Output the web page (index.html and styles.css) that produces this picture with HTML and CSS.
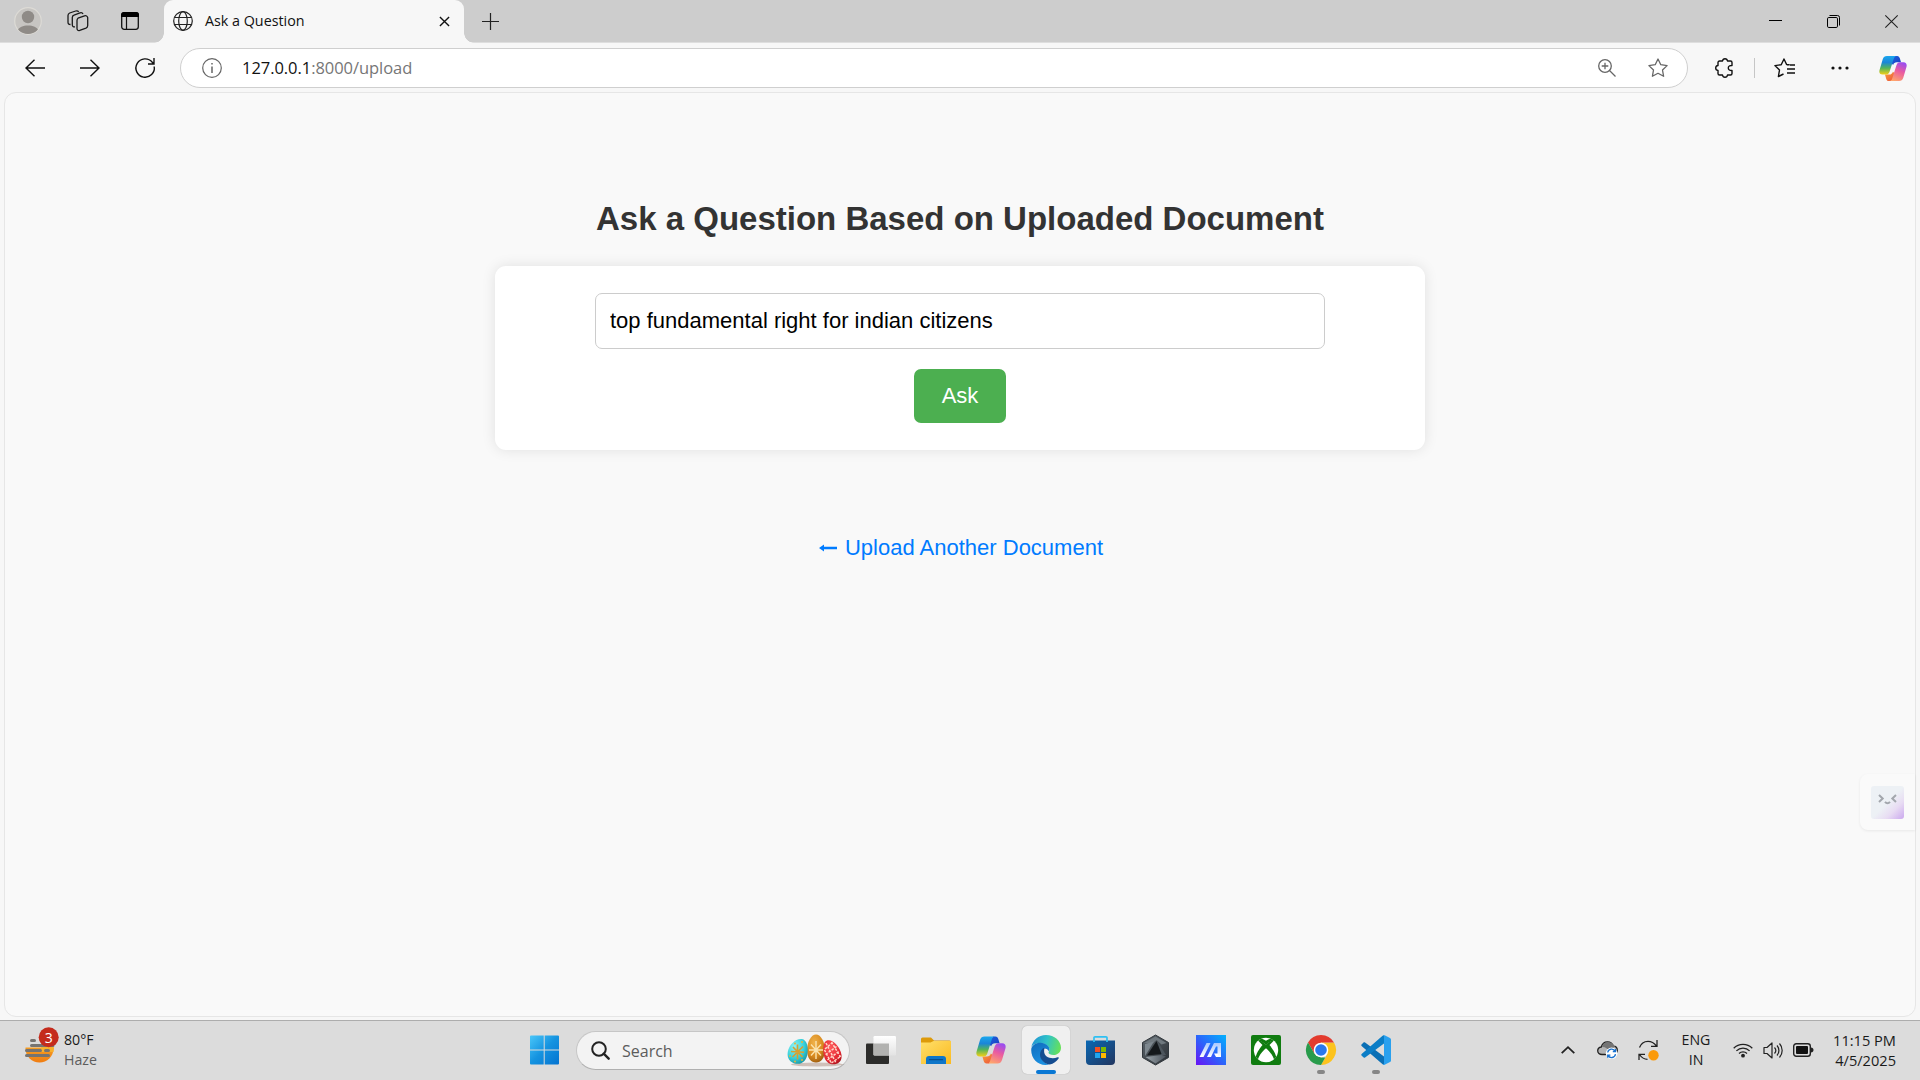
FILE: index.html
```html
<!DOCTYPE html>
<html lang="en">
<head>
<meta charset="utf-8">
<title>Ask a Question</title>
<link rel="stylesheet" href="styles.css">
</head>
<body>
<svg class="defs" width="0" height="0" aria-hidden="true">
  <defs>
    <linearGradient id="cp-a" x1="0" y1="0" x2="0" y2="1"><stop offset="0" stop-color="#1aa7ee"/><stop offset=".35" stop-color="#1b86d8"/><stop offset=".65" stop-color="#52b45c"/><stop offset="1" stop-color="#f5cf16"/></linearGradient>
    <linearGradient id="cp-b" x1=".7" y1="0" x2=".3" y2="1"><stop offset="0" stop-color="#9a4df0"/><stop offset=".45" stop-color="#ea5ba0"/><stop offset="1" stop-color="#ffa66b"/></linearGradient>
    <linearGradient id="cp-c" x1="0" y1="0" x2="1" y2="1"><stop offset="0" stop-color="#1b62e0"/><stop offset="1" stop-color="#1c3fc0"/></linearGradient>
    <linearGradient id="cp-d" x1="0" y1="0" x2="1" y2="1"><stop offset="0" stop-color="#f9a13a"/><stop offset="1" stop-color="#ea4a3c"/></linearGradient>
    <symbol id="copilot" viewBox="0 0 30 28">
      <path d="M17 .5h2.500c1.600 0 2.300 1 2.800 2.500l1.300 4.200h-4.600c-2 0-3.200 1-3.900 3L12 7z" fill="url(#cp-c)"/>
      <path d="M13 27.500h-2.500c-1.600 0-2.300-1-2.800-2.500L6.400 20.500H11c2 0 3.200-1 3.900-3L19 21z" fill="url(#cp-d)"/>
      <path d="M8.500.500H19c-2 0-2.700 1.400-3.400 3.600L11.300 17.500c-.7 2-1.800 3-3.800 3H3.700C.8 20.500-.2 18.300.6 15.500L4 4C4.800 1.600 6.200.500 8.500.500z" fill="url(#cp-a)"/>
      <path d="M21.500 27.500H11c2 0 2.700-1.400 3.400-3.600l4.300-13.400c.7-2 1.800-3.300 3.800-3.300h3.800c2.900 0 3.900 2.500 3.100 5.300L26 24c-.8 2.400-2.200 3.500-4.500 3.500z" fill="url(#cp-b)"/>
    </symbol>
  </defs>
</svg>

<div class="screen">
  <header class="tabstrip">
    <svg class="avatar" width="28" height="28" viewBox="0 0 28 28"><defs><clipPath id="av"><circle cx="14" cy="14" r="13"/></clipPath></defs><circle cx="14" cy="14" r="13.300" fill="#c7c5c2" stroke="#dddbd6" stroke-width="1.200"/><g fill="#8f8b87" clip-path="url(#av)"><circle cx="14" cy="10" r="6.200"/><path d="M3.500 28v-4.500C5 20 9 18.500 14 18.500s9 1.500 10.500 5V28z"/></g></svg>
    <svg class="workspaces" width="22" height="22" viewBox="0 0 22 22" fill="none" stroke="#1a1a1a" stroke-width="1.300"><path d="M11 8.200 17.500 5.800c1.500-.5 3 .3 3.200 1.800v8c0 1.200-.5 2-1.700 2.500l-6.300 2.300c-1.500.5-2.700-.3-2.700-1.800v-8c0-1.200.2-1.900 1-2.400z"/><path d="M8 16.800c-1.800.2-2.700-.6-2.700-2V7.500c0-1.200.5-2 1.700-2.400l6-2.200c1.300-.5 2.500 0 3 1.100"/><path d="M3.500 14.500C1.800 14.500 1 13.600 1 12.300V5.500c0-1.300.5-2 1.700-2.500l6-2c1.300-.4 2.300-.1 3 .8"/></svg>
    <svg class="vtabs" width="18" height="18" viewBox="0 0 18 18"><rect x=".7" y=".7" width="16.600" height="16.600" rx="2.500" fill="none" stroke="#111" stroke-width="1.300"/><path d="M0 5V3a3 3 0 0 1 3-3h12a3 3 0 0 1 3 3v2z" fill="#000"/><path d="M5.500 5v12" stroke="#111" stroke-width="1.200"/></svg>
    <div class="tab">
      <svg width="20" height="20" viewBox="0 0 20 20" fill="none" stroke="#222" stroke-width="1.200"><circle cx="10" cy="10" r="9.300"/><ellipse cx="10" cy="10" rx="4.300" ry="9.300"/><path d="M1.500 6.500h17M1.500 13.500h17"/></svg>
      <span class="tab-title">Ask a Question</span>
      <svg class="tab-close" width="11" height="11" viewBox="0 0 12 12" stroke="#111" stroke-width="1.500"><path d="m1 1 10 10M11 1 1 11"/></svg>
    </div>
    <svg class="newtab" width="17" height="17" viewBox="0 0 17 17" stroke="#222" stroke-width="1.200"><path d="M8.500 0v17M0 8.500h17"/></svg>
    <div class="winctl">
      <svg width="13" height="13" viewBox="0 0 13 13"><path d="M0 5.500h13" stroke="#000"/></svg>
      <svg width="13" height="13" viewBox="0 0 13 13" fill="none" stroke="#000"><rect x=".5" y="2.500" width="10" height="10" rx="1.300"/><path d="M2.500.500h8a2 2 0 0 1 2 2v8"/></svg>
      <svg width="13" height="13" viewBox="0 0 13 13" stroke="#222" stroke-width="1.100"><path d="m.3.300 12.400 12.400M12.700.300.300 12.700"/></svg>
    </div>
  </header>

  <nav class="toolbar">
    <div class="navbtns">
      <svg width="20" height="18" viewBox="0 0 20 18" fill="none" stroke="#111" stroke-width="1.400"><path d="M20 9H1M9.500.700 1 9l8.500 8.300"/></svg>
      <svg width="20" height="18" viewBox="0 0 20 18" fill="none" stroke="#111" stroke-width="1.400"><path d="M0 9h19M10.500.700 19 9l-8.500 8.300"/></svg>
      <svg width="20" height="20" viewBox="0 0 20 20" fill="none" stroke="#111" stroke-width="1.400"><path d="M19.200 8.500A9.200 9.200 0 1 1 17.300 4.300L18.800 6M19 0v6h-6"/></svg>
    </div>
    <div class="omnibox">
      <svg width="20" height="20" viewBox="0 0 20 20" fill="none" stroke="#666" stroke-width="1.200"><circle cx="10" cy="10" r="9.300"/><path d="M10 8.500V15M10 5v1.600" stroke-width="1.500"/></svg>
      <span class="url"><b>127.0.0.1</b>:8000/upload</span>
      <svg class="zoomicon" width="18" height="18" viewBox="0 0 18 18" fill="none" stroke="#666" stroke-width="1.300"><circle cx="7" cy="7" r="6.300"/><path d="M7 3.700v6.600M3.700 7h6.600M11.500 11.500l6 6"/></svg>
      <svg class="staricon" width="20" height="20" viewBox="0 0 20 20" fill="none" stroke="#666" stroke-width="1.300" stroke-linejoin="round"><path d="m10 1 2.800 5.700 6.300.9-4.600 4.400 1.100 6.300-5.600-3-5.600 3 1.100-6.300L.9 7.600l6.300-.9z"/></svg>
    </div>
    <svg class="puzzle" width="20" height="20" viewBox="0 0 20 20" fill="none" stroke="#111" stroke-width="1.400" stroke-linejoin="round"><path d="M4.500 3h3C7.700 1.500 8.600.700 10 .700s2.300.8 2.500 2.300h3A1.500 1.500 0 0 1 17 4.500v3c-2.200-.2-3.700.8-3.700 2.500s1.500 2.700 3.700 2.500v3a1.500 1.500 0 0 1-1.500 1.500h-3c-.2 1.500-1.100 2.300-2.500 2.300S7.700 18.500 7.500 17h-3A1.500 1.500 0 0 1 3 15.500v-3C1.500 12.300.700 11.400.700 10S1.500 7.700 3 7.500v-3A1.500 1.500 0 0 1 4.500 3z"/></svg>
    <span class="sep"></span>
    <svg class="favs" width="21" height="20" viewBox="0 0 21 20" fill="none" stroke="#111" stroke-width="1.400" stroke-linejoin="round"><path d="M12.700 6.700 10 1 7.200 6.700l-6.300.9L5.500 12l-1.100 6.500L9.500 16M12.700 6.700h3M13 11h8M13 15h8M16 7h5"/></svg>
    <svg class="more" width="18" height="4" viewBox="0 0 18 4" fill="#111"><circle cx="2" cy="2" r="1.600"/><circle cx="9" cy="2" r="1.600"/><circle cx="16" cy="2" r="1.600"/></svg>
    <svg class="copilot-btn" width="28" height="27"><use href="#copilot" width="28" height="27"/></svg>
  </nav>

  <main class="viewport">
    <h1>Ask a Question Based on Uploaded Document</h1>
    <form class="card">
      <input type="text" value="top fundamental right for indian citizens">
      <button type="button">Ask</button>
    </form>
    <a class="back"><svg width="18" height="8" viewBox="0 0 18 8" fill="#007bff"><path d="M0 4 5 .500v2.200h13v2.600H5v2.200z"/></svg><span>Upload Another Document</span></a>
    <aside class="helper">
      <div class="face"><svg width="19" height="11" viewBox="0 0 19 11" fill="none" stroke="#a3a7ad" stroke-width="2"><path d="m1 1 3.700 3.500L1 8M18 1l-3.700 3.500L18 8M7 7.800c1.500 1.900 3.500 1.900 5 0"/></svg></div>
    </aside>
  </main>

  <footer class="taskbar">
    <div class="weather">
      <svg width="36" height="38" viewBox="0 0 36 38">
        <defs><linearGradient id="sun" x1="0" y1="0" x2="0" y2="1"><stop offset="0" stop-color="#f9b830"/><stop offset="1" stop-color="#f07d12"/></linearGradient></defs>
        <circle cx="14.500" cy="21.500" r="14" fill="url(#sun)"/><path d="M0 0h30v20.500H0z" fill="#dcdcdc"/><path d="M16 23a6 6 0 0 1 13-2l-.5 4H16z" fill="#f9b02a"/>
        <g stroke="#767472" stroke-width="3" stroke-linecap="round"><path d="M6.500 13.500h3M6.500 18.500H28M1.500 23.500h14M20.500 23.500h3M1.500 28.500h22"/></g>
        <circle cx="23.700" cy="10.300" r="10" fill="#c42b1c"/>
        <text x="23.700" y="15.500" class="badge" text-anchor="middle">3</text>
      </svg>
      <div class="weather-text"><span>80°F</span><span class="dim">Haze</span></div>
    </div>

    <div class="apps">
      <div class="cell"><svg width="30" height="30" viewBox="0 0 30 30"><defs><linearGradient id="win" gradientUnits="userSpaceOnUse" x1="0" y1="0" x2="30" y2="30"><stop offset="0" stop-color="#4cc9fa"/><stop offset=".5" stop-color="#1593e0"/><stop offset="1" stop-color="#0473d0"/></linearGradient></defs><path fill="url(#win)" d="M2 .500H14.700v14H1v-13a1 1 0 0 1 1-1zM15.700.500h13.300a1 1 0 0 1 1 1v13h-14.300zM1 15.500h13.700v14H2a1 1 0 0 1-1-1zM15.700 15.500H30v13a1 1 0 0 1-1 1h-13.300z"/></svg></div>
      <div class="search">
        <svg width="19" height="19" viewBox="0 0 19 19" fill="none" stroke="#222" stroke-width="2"><circle cx="8" cy="8" r="6.800"/><path d="m12.700 12.700 5 5" stroke-width="2.400" stroke-linecap="round"/></svg>
        <span>Search</span>
        <svg class="eggs" width="56" height="33" viewBox="0 0 56 33">
          <defs><radialGradient id="e1" cx=".35" cy=".3" r=".8"><stop offset="0" stop-color="#8cf2f6"/><stop offset=".6" stop-color="#37cfd8"/><stop offset="1" stop-color="#168f9d"/></radialGradient><radialGradient id="e2" cx=".4" cy=".3" r=".8"><stop offset="0" stop-color="#f0b24a"/><stop offset=".6" stop-color="#d8891e"/><stop offset="1" stop-color="#8f520e"/></radialGradient><radialGradient id="e3" cx=".4" cy=".3" r=".8"><stop offset="0" stop-color="#ff5a5c"/><stop offset=".7" stop-color="#e32530"/><stop offset="1" stop-color="#a01019"/></radialGradient></defs>
          <ellipse cx="30" cy="30.500" rx="26" ry="2" fill="#bfa9a0" opacity=".7"/>
          <path d="M29 .500c5 0 9 8 9 15.500 0 8-4 12.500-9 12.500S20 24 20 16C20 8.500 24 .500 29 .500z" fill="url(#e2)"/>
          <path d="M15 5c4.500 1 6.500 7 5.500 14.500C19.500 27 15 30.500 9 29.700 3 29-.3 24 .8 17.800 2 10.500 9 4 15 5z" fill="url(#e1)"/>
          <path d="M40 6.500c6-1.500 13.500 7 14.500 14.500.7 5-2 8.500-6.500 9.200-5 .8-9.500-2-11-8.200-1.300-6-1-14.400 3-15.500z" fill="url(#e3)"/>
          <g stroke="#d99f2e" stroke-width="1.600"><path d="m4 17.500 13 .8M10.500 10.500v15M6 13l9.500 10M16 12.500 5.500 23"/></g>
          <g stroke="#fbe3ae" stroke-width="1.400"><path d="M29 7v18M22 16h14M24 10.500l10 11M34 10.500l-10 11"/></g>
          <g stroke="#ffd6c8" stroke-width="1.500" stroke-dasharray="2.500 1.300"><path d="M39 9l10 20M44.500 8l9 15M37.500 16l7 13.500M38 15l7-6M38.500 20.500l11-8M40.500 26l12-9M44.500 29l9.500-7"/></g>
          <g fill="#e5b33c"><circle cx="8" cy="9.500" r="1"/><circle cx="15" cy="8" r="1"/><circle cx="3" cy="22" r="1"/><circle cx="8" cy="27.500" r="1"/><circle cx="15" cy="26" r="1"/></g>
        </svg>
      </div>
      <div class="cell"><svg width="30" height="28" viewBox="0 0 30 28"><defs><linearGradient id="tv" x1="0" y1="0" x2="0" y2="1"><stop offset="0" stop-color="#fff"/><stop offset="1" stop-color="#e3e3e3"/></linearGradient></defs><rect x="0" y="7.500" width="23" height="20.500" rx="1" fill="#2c2c2a"/><rect x="7.500" y="0" width="22.500" height="19.500" rx="1.200" fill="url(#tv)"/><path d="M7.500 7.500H23v12H8.500a1 1 0 0 1-1-1z" fill="#b2b2b0"/></svg></div>
      <div class="cell"><svg width="30" height="27" viewBox="0 0 30 27"><defs><linearGradient id="fo" x1="0" y1="0" x2="1" y2="1"><stop offset="0" stop-color="#ffdf6a"/><stop offset="1" stop-color="#fbba20"/></linearGradient></defs><path d="M1.500.500H10l3 3h15.500a1.500 1.500 0 0 1 1.500 1.500v6H0V2A1.500 1.500 0 0 1 1.500.500z" fill="#dd9a0a"/><path d="M0 5.500h9.500l3-1.500H30v23H0z" fill="url(#fo)"/><path d="M5 27v-5a3 3 0 0 1 3-3h14a3 3 0 0 1 3 3v5z" fill="#0f76c9"/><path d="M8.500 22.700h13" stroke="#0a4f8f" stroke-width="1.300" stroke-linecap="round"/></svg></div>
      <div class="cell"><svg width="30" height="28"><use href="#copilot" width="30" height="28"/></svg></div>
      <div class="cell active"><svg width="30" height="30" viewBox="0 0 30 30"><defs><linearGradient id="ed1" x1="0" y1=".3" x2="1" y2=".5"><stop offset="0" stop-color="#2092d4"/><stop offset=".5" stop-color="#2fc3c8"/><stop offset="1" stop-color="#66e05a"/></linearGradient><linearGradient id="ed2" x1="0" y1="0" x2=".4" y2="1"><stop offset="0" stop-color="#0f6cbd"/><stop offset="1" stop-color="#1b8fe0"/></linearGradient></defs>
        <path d="M.300 12.500C1.500 5 7.500 0 15 0c8.500 0 15 6 15 12.700 0 4.300-3.300 7.300-7.500 7.300-3 0-5-1-5-2.200 0-.9 1-1.300 1-3.300C18.500 11 14 8 9.500 8 5 8 1.500 9.700.300 12.500z" fill="url(#ed1)"/>
        <path d="M.200 15C.200 10.500 4.500 7.800 9.500 7.800c4.500 0 9 3 9 6.700 0 .8-.2 1.500-.5 2-1-2-2.500-3-4.500-3-3 1.500-3.500 4-3.500 6.500 0 5 4 8.500 8 9.500-1 .3-2 .5-3.500.5C6.500 30 .200 23.500.200 15z" fill="url(#ed2)"/>
        <path d="M13.500 12.500c-2.500 1-4.500 3.800-4.500 7 0 5.200 4.500 9.700 9.800 10 3.700-.7 6.900-3 8.800-6 .5-1-.2-1.500-1-1.200-6 2.500-13.500 0-13.500-6 0-1.500.2-2.500.4-3.800z" fill="#154d91"/></svg></div>
      <div class="cell"><svg width="30" height="29" viewBox="0 0 30 29"><defs><linearGradient id="st" x1="0" y1="0" x2="1" y2="1"><stop offset="0" stop-color="#0a68b4"/><stop offset="1" stop-color="#22365f"/></linearGradient></defs><path d="M0 4.500h29V25a4 4 0 0 1-4 4H4a4 4 0 0 1-4-4z" fill="url(#st)"/><path d="M8 6V1.800A1 1 0 0 1 9 .8h11a1 1 0 0 1 1 1V6" fill="none" stroke="#2fc0f2" stroke-width="1.700"/><path fill="#f25022" d="M9 11h5v5H9z"/><path fill="#7fba00" d="M15 11h5v5h-5z"/><path fill="#20a5ee" d="M9 17h5v5H9z"/><path fill="#ffb900" d="M15 17h5v5h-5z"/></svg></div>
      <div class="cell"><svg width="28" height="30" viewBox="0 0 28 30"><defs><linearGradient id="hx" x1="0" y1="0" x2="1" y2="1"><stop offset="0" stop-color="#5d666d"/><stop offset="1" stop-color="#2a2f34"/></linearGradient><linearGradient id="hx2" x1="0" y1="0" x2="1" y2="0"><stop offset="0" stop-color="#9ba4aa"/><stop offset="1" stop-color="#4a525a"/></linearGradient></defs><path d="M13.500 0 26.500 7.500v15L13.500 30 .500 22.500v-15z" fill="url(#hx)" stroke="#32383d" stroke-width="1"/><path d="M13.500 1.500 24.500 8l-5 1.500-5-4.500-3.500 3L2 8z" fill="#6f787e"/><path d="M12 6.500 3 21V9z" fill="#7d878e"/><path d="m15 5.500 9 14.500-5 .5z" fill="#4d565d"/><path d="M14.500 6 5 20.500l14.500-1.500z" fill="#14181b"/><path d="m3.500 22 16-2 4.500 1.500L13.500 28.500z" fill="url(#hx2)"/></svg></div>
      <div class="cell"><svg width="30" height="30" viewBox="0 0 30 30"><defs><linearGradient id="as" x1="0" y1="1" x2="1" y2="0"><stop offset="0" stop-color="#6a12f5"/><stop offset=".5" stop-color="#2b66fb"/><stop offset="1" stop-color="#02b2fd"/></linearGradient><linearGradient id="as2" x1="0" y1="1" x2="0" y2="0"><stop offset="0" stop-color="#fff"/><stop offset="1" stop-color="#a9c8ff"/></linearGradient></defs><path d="M0 0h30v30H0z" fill="url(#as)"/><path d="M3.500 22 10.500 8h4L7.500 22zM11 22l7-14h7v14h-3.500V11.500h-1.500L15 22z" fill="url(#as2)"/><path d="M18 18.500h4V22h-2z" fill="#fff"/></svg></div>
      <div class="cell"><svg width="30" height="30" viewBox="0 0 30 30"><defs><clipPath id="xb"><circle cx="15" cy="15" r="12.200"/></clipPath></defs><rect width="30" height="30" rx="2" fill="#107c10"/><circle cx="15" cy="15" r="12.200" fill="#fff"/><g fill="#107c10" clip-path="url(#xb)"><path d="M5 3c3.500-.4 7.500 1 10 2.800C17.500 4 21.500 2.600 25 3l-1 2.500C21 5.500 17.800 7.500 15 9.500 12.200 7.500 9 5.500 6 5.500z"/><path d="M7 5.500c2-.3 5.500 1.800 8 4 2.500-2.200 6-4.300 8-4L18.500 10C22 14.500 26 19.500 25.500 26h-2C22.500 21.500 19 16.500 15 13.300 11 16.500 7.500 21.500 6.500 26h-2C4 19.500 8 14.500 11.500 10z"/></g></svg></div>
      <div class="cell running"><svg width="30" height="30" viewBox="0 0 30 30"><path d="M28 7.500A15 15 0 0 1 15 30l6.500-11.300L15 7.500z" fill="#fcc31e"/><path d="M2 7.500 8.500 18.700 15 15V7.500H28A15 15 0 0 0 2 7.500z" fill="#e33b2e"/><path d="M2 7.500l6.500 11.300L15 22.500l4.300 0L15 30A15 15 0 0 1 2 7.500z" fill="#289b4b"/><circle cx="15" cy="15" r="7.300" fill="#fff"/><circle cx="15" cy="15" r="5.800" fill="#2a78ec"/></svg></div>
      <div class="cell running"><svg width="30" height="30" viewBox="0 0 30 30"><path d="M.500 9.500 2.300 7.700c.6-.5 1.200-.5 1.800-.1L23 21.500V29.800c-.7 0-1.200-.2-1.700-.7L.600 11c-.5-.5-.5-1-.1-1.500z" fill="#0a6fb5"/><path d="M.500 20.500l1.800 1.800c.6.500 1.200.5 1.800.1L23 8.500V.2c-.7 0-1.200.2-1.700.7L.600 19c-.5.500-.5 1-.1 1.500z" fill="#0b7dc6"/><path d="M22.300.300c.5-.2.900-.2 1.300 0l5.400 2.600c.6.300 1 .9 1 1.600v21c0 .7-.4 1.300-1 1.600l-5.400 2.600c-.9.400-1.700.2-2.300-.5 1 .5 1.700 0 1.700-1V1.800c0-1-.8-1.500-1.700-1 .3-.2.600-.4 1-.5z" fill="#29a0ee"/></svg></div>
    </div>

    <div class="tray">
      <svg class="chev" width="14" height="8" viewBox="0 0 14 8" fill="none" stroke="#222" stroke-width="1.800"><path d="m.7 7.200 6.300-6 6.300 6"/></svg>
      <svg class="cloud" width="21" height="18" viewBox="0 0 21 18"><path d="M5 13.500c-2.500 0-4.300-1.500-4.300-3.700C.7 7.500 2.300 6.300 4.300 6 5 3 7.500.800 10.500.800c3 0 5 1.700 5.800 4.400 2.200.1 4 1.800 4 4 0 2.500-2 4.300-4.300 4.300z" fill="#b4b4b4" stroke="#222" stroke-width="1.300"/><path d="M5 6c3-.5 5.500 1.500 7 4l6-4.500C16.500 3 14 .900 10.500.900 7.500.900 5.500 3 5 6z" fill="#747474"/><circle cx="14.600" cy="12.300" r="5.800" fill="#fff"/><path d="M10.700 11.500a4 4 0 0 1 7.500-1.200M18.500 13.200a4 4 0 0 1-7.500 1.200M18.500 8v2.500h-2.700M10.700 16.700v-2.500h2.700" fill="none" stroke="#1a73d0" stroke-width="1.300"/></svg>
      <svg class="update" width="21" height="21" viewBox="0 0 21 21" fill="none" stroke="#222" stroke-width="1.300"><path d="M1.500 7.500C3 3.500 6 1.300 10 1.300c3.500 0 6.200 1.700 8.500 4.700M19 0v6.300h-6M9.500 19.300c-3.500 0-6-1.800-8-4.800M1 20v-5.700h6"/><circle cx="15.500" cy="15.300" r="5.200" fill="#fb9a0a" stroke="none"/></svg>
      <div class="lang"><span>ENG</span><span>IN</span></div>
      <svg class="wifi" width="20" height="16" viewBox="0 0 20 16" fill="none" stroke="#222" stroke-width="1.300"><path d="M.7 6.200a13 13 0 0 1 18.600 0M3.400 8.900a9.300 9.300 0 0 1 13.200 0M6 11.500a5.700 5.700 0 0 1 8 0"/><circle cx="10" cy="13.700" r="1.900" fill="#222" stroke="none"/></svg>
      <svg class="vol" width="20" height="17" viewBox="0 0 20 17" fill="none" stroke="#222" stroke-width="1.200"><path d="M1 5.500h3l5-4.500v15l-5-4.500H1z" stroke-linejoin="round"/><path d="M11.500 5.500a4.500 4.500 0 0 1 0 6M14 3.500a7.500 7.500 0 0 1 0 10M16.500 1.500a10.500 10.500 0 0 1 0 14"/></svg>
      <svg class="batt" width="21" height="14" viewBox="0 0 21 14"><rect x=".7" y=".7" width="16.600" height="12.600" rx="2.500" fill="none" stroke="#222" stroke-width="1.400"/><rect x="3" y="3" width="12" height="8" rx="1" fill="#111"/><path d="M18 4.500c1.500 0 2.500.9 2.500 2.500s-1 2.500-2.500 2.500z" fill="#222"/></svg>
      <div class="clock"><span>11:15 PM</span><span>4/5/2025</span></div>
    </div>
  </footer>
</div>
</body>
</html>
```
FILE: styles.css
```css
* { box-sizing: border-box; }

body {
  margin: 0;
  overflow: hidden;
  font-family: "Open Sans", "Noto Sans", sans-serif;
  color: #1a1a1a;
}

svg { display: block; flex: none; overflow: visible; }
.defs { position: absolute; }

.screen {
  width: 1920px;
  height: 1080px;
  display: flex;
  flex-direction: column;
  background: #f7f7f7;
}

/* Tab strip */
.tabstrip {
  height: 42px;
  flex: none;
  display: flex;
  align-items: center;
  padding: 0 22px 0 14px;
  background: #cdcdcd;
  box-shadow: 0 1px 0 #dedede;
}
.workspaces { margin-left: 25px; }
.vtabs { margin-left: 32px; }
.tab {
  position: relative;
  width: 300px;
  height: 43px;
  margin-left: 25px;
  padding: 0 14px 1px 9px;
  display: flex;
  align-items: center;
  background: #f7f7f7;
  border-radius: 9px 9px 0 0;
}
.tab::before,
.tab::after {
  content: "";
  position: absolute;
  bottom: 0;
  width: 10px;
  height: 10px;
}
.tab::before { left: -10px; background: radial-gradient(circle at 0 0, transparent 9.500px, #f7f7f7 10px); }
.tab::after { right: -10px; background: radial-gradient(circle at 100% 0, transparent 9.500px, #f7f7f7 10px); }
.tab-title {
  flex: 1;
  margin-left: 12px;
  font-size: 14.300px;
  line-height: 20px;
  color: #111;
}
.tab-close { margin-top: 1px; }
.newtab { margin-left: 18px; }
.winctl { margin-left: auto; display: flex; gap: 45px; }

/* Toolbar */
.toolbar {
  height: 50px;
  flex: none;
  display: flex;
  align-items: center;
  padding: 2px 13px 0 25px;
}
.navbtns { display: flex; align-items: center; gap: 35px; }
.omnibox {
  width: 1508px;
  height: 40px;
  margin-left: 25px;
  padding: 0 19px 0 21px;
  display: flex;
  align-items: center;
  background: #fff;
  border: 1px solid #cfcfcf;
  border-radius: 20px;
}
.url {
  margin: -2px 0 0 20px;
  font-size: 16.500px;
  letter-spacing: -.05px;
  color: #767676;
}
.url b { font-weight: 400; color: #111; }
.zoomicon { margin-left: auto; }
.staricon { margin-left: 32px; }
.puzzle { margin-left: 27px; }
.sep { width: 1px; height: 20px; margin-left: 19px; background: #c6c6c6; }
.favs { margin-left: 19px; }
.more { margin-left: 36px; }
.copilot-btn { margin-left: 30px; }

/* Web page */
.viewport {
  position: relative;
  height: 925px;
  flex: none;
  margin: 0 4px;
  padding-top: 106px;
  display: flex;
  flex-direction: column;
  align-items: center;
  background: #f9f9f9;
  border: 1px solid #e6e6e6;
  border-radius: 12px;
  font-family: "Liberation Sans", Arial, sans-serif;
}
h1 {
  margin: 0;
  font-size: 33px;
  line-height: 40px;
  color: #333;
  white-space: nowrap;
}
.card {
  width: 930px;
  height: 184px;
  margin-top: 27px;
  padding-top: 27px;
  display: flex;
  flex-direction: column;
  align-items: center;
  gap: 20px;
  background: #fff;
  border-radius: 11px;
  box-shadow: 0 0 14px rgba(0, 0, 0, .1);
}
.card input {
  width: 730px;
  height: 56px;
  padding: 0 14px;
  border: 1px solid #ccc;
  border-radius: 7px;
  font: 22px "Liberation Sans", Arial, sans-serif;
  color: #000;
}
.card button {
  width: 92px;
  height: 54px;
  padding: 0;
  border: 0;
  border-radius: 7px;
  background: #4caf50;
  color: #fff;
  font: 22px "Liberation Sans", Arial, sans-serif;
}
.back {
  margin: 85px 0 0 2px;
  display: flex;
  align-items: center;
  gap: 8px;
  font-size: 22px;
  line-height: 26px;
  color: #007bff;
}
.helper {
  position: absolute;
  right: 0;
  top: 681px;
  width: 55px;
  height: 56px;
  padding: 12px 0 0 11px;
  background: #fafafa;
  border-radius: 8px 0 0 8px;
  box-shadow: 0 1px 3px rgba(0, 0, 0, .07);
}
.face {
  width: 33px;
  height: 33px;
  padding: 8px 0 0 7px;
  border-radius: 3px;
  background: linear-gradient(135deg, #edf1f5 50%, #e8dcf3 72%, #cba8ee);
}

/* Taskbar */
.taskbar {
  height: 60px;
  margin-top: auto;
  display: flex;
  align-items: flex-start;
  background: #dcdcdc;
  border-top: 1px solid #adadad;
}
.weather { width: 520px; padding: 6px 0 0 25px; display: flex; gap: 3px; }
.badge { font-size: 14px; fill: #fff; }
.weather-text, .lang, .clock {
  display: flex;
  flex-direction: column;
  font-size: 14.200px;
  line-height: 20px;
}
.weather-text { padding-top: 3px; }
.dim { color: #5c5c5c; }

.apps { display: flex; gap: 7px; padding-top: 5px; }
.cell {
  position: relative;
  width: 48px;
  height: 48px;
  display: grid;
  place-items: center;
  border-radius: 5px;
}
.active { background: #f0f0f0; box-shadow: 0 0 1px rgba(0, 0, 0, .3); }
.active::after,
.running::after {
  content: "";
  position: absolute;
  bottom: 0;
  left: 14px;
  width: 20px;
  height: 4px;
  border-radius: 2px;
  background: #0a78d4;
}
.running::after { left: 20px; width: 8px; background: #868686; }
.search {
  width: 274px;
  height: 39px;
  margin: 5px 0 0 1px;
  padding: 0 6px 0 14px;
  display: flex;
  align-items: center;
  background: #f3f3f3;
  border: 1px solid #c6c6c6;
  border-bottom-color: #b0b0b0;
  border-radius: 20px;
  font-size: 16px;
  color: #5c5c5c;
}
.search span { margin-left: 12px; }
.eggs { margin-left: auto; }

.tray {
  flex: 1;
  display: flex;
  align-items: center;
  padding: 9px 24px 0 0;
  justify-content: flex-end;
}
.cloud { margin-left: 22px; }
.update { margin-left: 20px; }
.lang { width: 38px; margin-left: 18px; align-items: center; }
.wifi { margin-left: 18px; }
.vol { margin-left: 10px; }
.batt { margin-left: 10px; }
.clock {
  width: 64px;
  margin-left: 18px;
  align-items: flex-end;
  font-size: 14.600px;
  white-space: nowrap;
}
```
